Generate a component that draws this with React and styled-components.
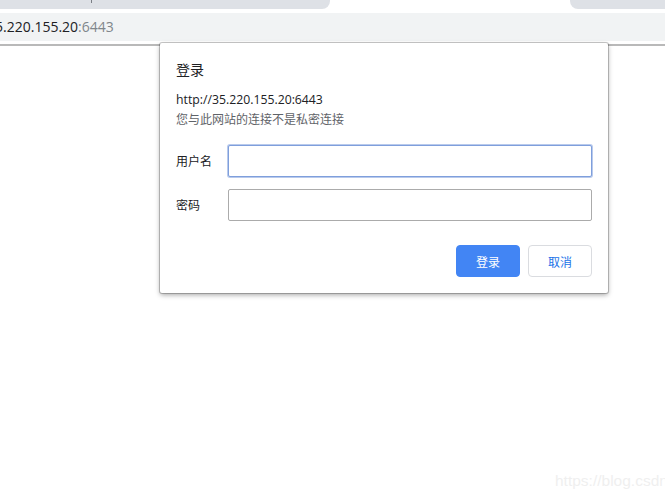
import React from "react";
import styled, { createGlobalStyle } from "styled-components";

const Global = createGlobalStyle`
  html, body { margin: 0; padding: 0; background: #fff; }
  body { width: 665px; height: 499px; overflow: hidden; font-family: "Noto Sans", "Noto Sans CJK SC", sans-serif; }
  * { box-sizing: border-box; }
`;

const Page = styled.div`
  position: relative;
  width: 665px;
  height: 499px;
  overflow: hidden;
  background: #fff;
`;
const TabStrip = styled.div`
  height: 13px;
  display: flex;
  justify-content: space-between;
  align-items: flex-start;
  background: #fff;
`;
const Tab = styled.div`
  position: relative;
  width: ${p => p.$width}px;
  height: 9px;
  background: #dee1e6;
  border-radius: ${p => p.$side === "left" ? "0 0 8px 0" : "0 0 0 8px"};
`;
const TabDivider = styled.span`
  position: absolute;
  left: 91px;
  top: 0;
  width: 1px;
  height: 3px;
  background: #7b7f85;
`;
const Toolbar = styled.div`
  height: 28px;
  background: #f1f3f4;
  display: flex;
  align-items: center;
  overflow: hidden;
`;
const Address = styled.div`
  margin-left: -13px;
  font-family: "Open Sans", "Noto Sans", sans-serif;
  font-size: 14px;
  line-height: 28px;
  color: #202124;
  white-space: nowrap;
`;
const Port = styled.span`
  color: #80868b;
`;
const ChromeRule = styled.div`
  margin-top: 3px;
  height: 2px;
  background: #b9b9b9;
`;
const Dialog = styled.div`
  position: absolute;
  left: 160px;
  top: 43px;
  width: 448px;
  height: 250px;
  padding: 15px 16px 16px;
  background: #fff;
  border-radius: 2px;
  box-shadow: 0 0 0 1px rgba(0,0,0,.2), 0 2px 5px 0 rgba(0,0,0,.35);
  display: flex;
  flex-direction: column;
`;
const Title = styled.h1`
  margin: 0;
  font-family: "Noto Sans CJK SC", sans-serif;
  font-size: 14px;
  font-weight: 400;
  line-height: 22px;
  color: #202124;
`;
const Origin = styled.div`
  margin-top: 10px;
  font-family: "Open Sans", "Noto Sans", sans-serif;
  font-size: 12.25px;
  line-height: 20px;
  color: #202124;
`;
const Note = styled.div`
  font-family: "Noto Sans CJK SC", sans-serif;
  font-size: 12px;
  line-height: 18px;
  color: #5f6368;
`;
const Fields = styled.div`
  margin-top: 17px;
  display: grid;
  grid-template-columns: 52px 364px;
  row-gap: 12px;
  align-items: center;
`;
const Label = styled.label`
  padding-bottom: 2px;
  font-family: "Noto Sans CJK SC", sans-serif;
  font-size: 12px;
  color: #202124;
`;
const Input = styled.div`
  height: 32px;
  background: #fff;
  border-radius: 2px;
  border: 1px solid ${p => p.$focused ? "#7f9fdc" : "#ababab"};
  box-shadow: ${p => p.$focused ? "0 0 0 1px rgba(127,159,220,.55)" : "none"};
`;
const Actions = styled.div`
  margin-top: 24px;
  display: flex;
  justify-content: flex-end;
  gap: 8px;
`;
const Button = styled.button`
  width: 64px;
  height: 32px;
  padding: 0;
  font-family: "Noto Sans CJK SC", sans-serif;
  font-size: 12px;
  border-radius: 4px;
  border: 1px solid ${p => p.$primary ? "#4285f4" : "#dadce0"};
  background: ${p => p.$primary ? "#4285f4" : "#fff"};
  color: ${p => p.$primary ? "#fff" : "#1a73e8"};
`;
const Watermark = styled.div`
  position: absolute;
  left: 555px;
  top: 471px;
  font-family: "Liberation Sans", sans-serif;
  font-size: 15.5px;
  line-height: 20px;
  color: #efefef;
  white-space: nowrap;
`;

export default function App() {
  return (
    <Page>
      <Global />
      <TabStrip>
        <Tab $side="left" $width={330}><TabDivider /></Tab>
        <Tab $side="right" $width={95} />
      </TabStrip>
      <Toolbar>
        <Address>35.220.155.20<Port>:6443</Port></Address>
      </Toolbar>
      <ChromeRule />
      <Dialog>
        <Title>登录</Title>
        <Origin>http://35.220.155.20:6443</Origin>
        <Note>您与此网站的连接不是私密连接</Note>
        <Fields>
          <Label>用户名</Label>
          <Input $focused />
          <Label>密码</Label>
          <Input />
        </Fields>
        <Actions>
          <Button $primary>登录</Button>
          <Button>取消</Button>
        </Actions>
      </Dialog>
      <Watermark>https://blog.csdn.net</Watermark>
    </Page>
  );
}
